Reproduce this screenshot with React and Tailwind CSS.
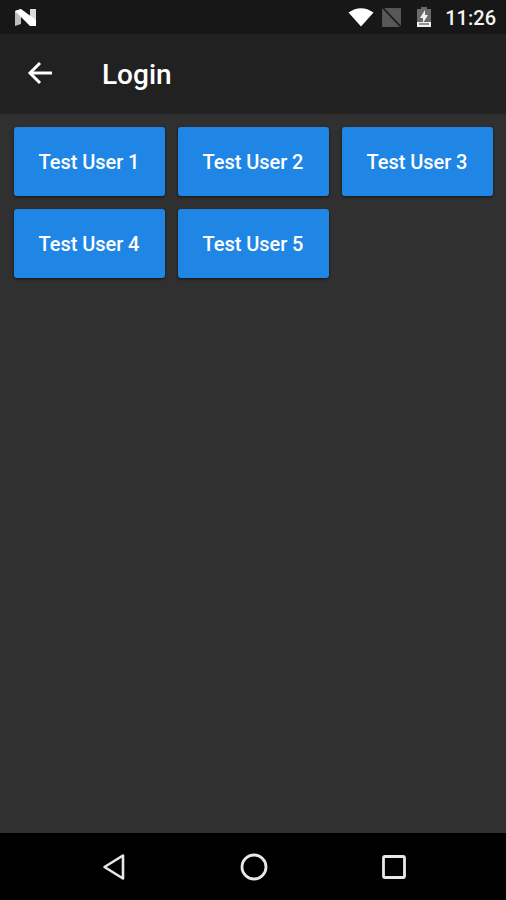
function Btn({ label }) {
  return (
    <div className="h-[69px] rounded-[3px] bg-[#2086e6] shadow-[0_1px_3px_rgba(0,0,0,0.6)] flex items-center justify-center text-white text-[20px] font-medium pr-[1px] tracking-[-0.05px]">
      {label}
    </div>
  );
}

export default function App() {
  return (
    <div className="w-[506px] h-[900px] flex flex-col bg-[#303030] overflow-hidden font-['Roboto',sans-serif]">
      <div className="h-[34px] shrink-0 bg-[#171717] flex items-center pl-[14px] pr-[10px] text-white">
        <svg width="23" height="19" viewBox="0 0 23 19">
          <path d="M1 3 L7 1 L7 16 L1 18 Z" fill="#bdbdbd" />
          <path d="M16 1 L22 1 L22 17 L16 12 Z" fill="#dcdcdc" />
          <path d="M1 3 L7 1 L22 12 L22 18 L16 18 Z" fill="#ffffff" />
        </svg>
        <div className="ml-auto flex items-center">
          <svg width="28" height="20" viewBox="0 0 26 20">
            <path d="M0.5 5.5 Q13 -3 25.5 5.5 L13 19.5 Z" fill="#ffffff" />
          </svg>
          <svg width="21" height="21" viewBox="0 0 20 20" className="ml-[6px]">
            <path d="M1 1 H19 V19 H1 Z" fill="#585858" />
            <path d="M1 0 L20 20" stroke="#1a1a1a" strokeWidth="1.6" />
          </svg>
          <svg width="16" height="22" viewBox="0 0 16 22" className="ml-[14px]">
            <path d="M5 1 H11 V3 H15 V21 H1 V3 H5 Z" fill="#6a6a6a" />
            <path d="M1 16 H15 V21 H1 Z" fill="#f2f2f2" />
            <path d="M9 4 L4 12 H7 V17 L12 9 H9 Z" fill="#f2f2f2" />
            <path d="M3 18 H13" stroke="#333" strokeWidth="1" />
          </svg>
          <span className="ml-[13px] mt-[2px] text-[20px] font-medium leading-none text-[#f4f4f4]">11:26</span>
        </div>
      </div>
      <div className="h-[79px] shrink-0 bg-[#212121] flex items-center text-white shadow-[0_1px_3px_rgba(0,0,0,0.3)]">
        <svg width="26" height="24" viewBox="0 0 26 24" className="ml-[27px] mb-[2px]" fill="none" stroke="#fff" strokeWidth="3">
          <path d="M25 12 H3" />
          <path d="M13 2 L3 12 L13 22" />
        </svg>
        <span className="ml-[49px] text-[28px] font-medium leading-none mt-[3px]">Login</span>
      </div>
      <div className="flex-1 px-[14px] pt-[14px]">
        <div className="grid grid-cols-3 gap-x-[13px] gap-y-[13px] w-[479px]">
          <Btn label="Test User 1" />
          <Btn label="Test User 2" />
          <Btn label="Test User 3" />
          <Btn label="Test User 4" />
          <Btn label="Test User 5" />
        </div>
      </div>
      <div className="h-[67px] shrink-0 bg-black flex items-center justify-center gap-[110px] pl-[2px]">
        <svg width="30" height="30" viewBox="0 0 30 30" fill="none" stroke="#e8e8e8" strokeWidth="2.6" strokeLinejoin="round">
          <path d="M24 3.5 V26.5 L5.5 15 Z" />
        </svg>
        <svg width="30" height="30" viewBox="0 0 30 30" fill="none" stroke="#e8e8e8" strokeWidth="2.8">
          <circle cx="15" cy="15" r="12" />
        </svg>
        <svg width="30" height="30" viewBox="0 0 30 30" fill="none" stroke="#e8e8e8" strokeWidth="2.8" strokeLinejoin="round">
          <rect x="4.5" y="4.5" width="21" height="21" rx="1.5" />
        </svg>
      </div>
    </div>
  );
}
